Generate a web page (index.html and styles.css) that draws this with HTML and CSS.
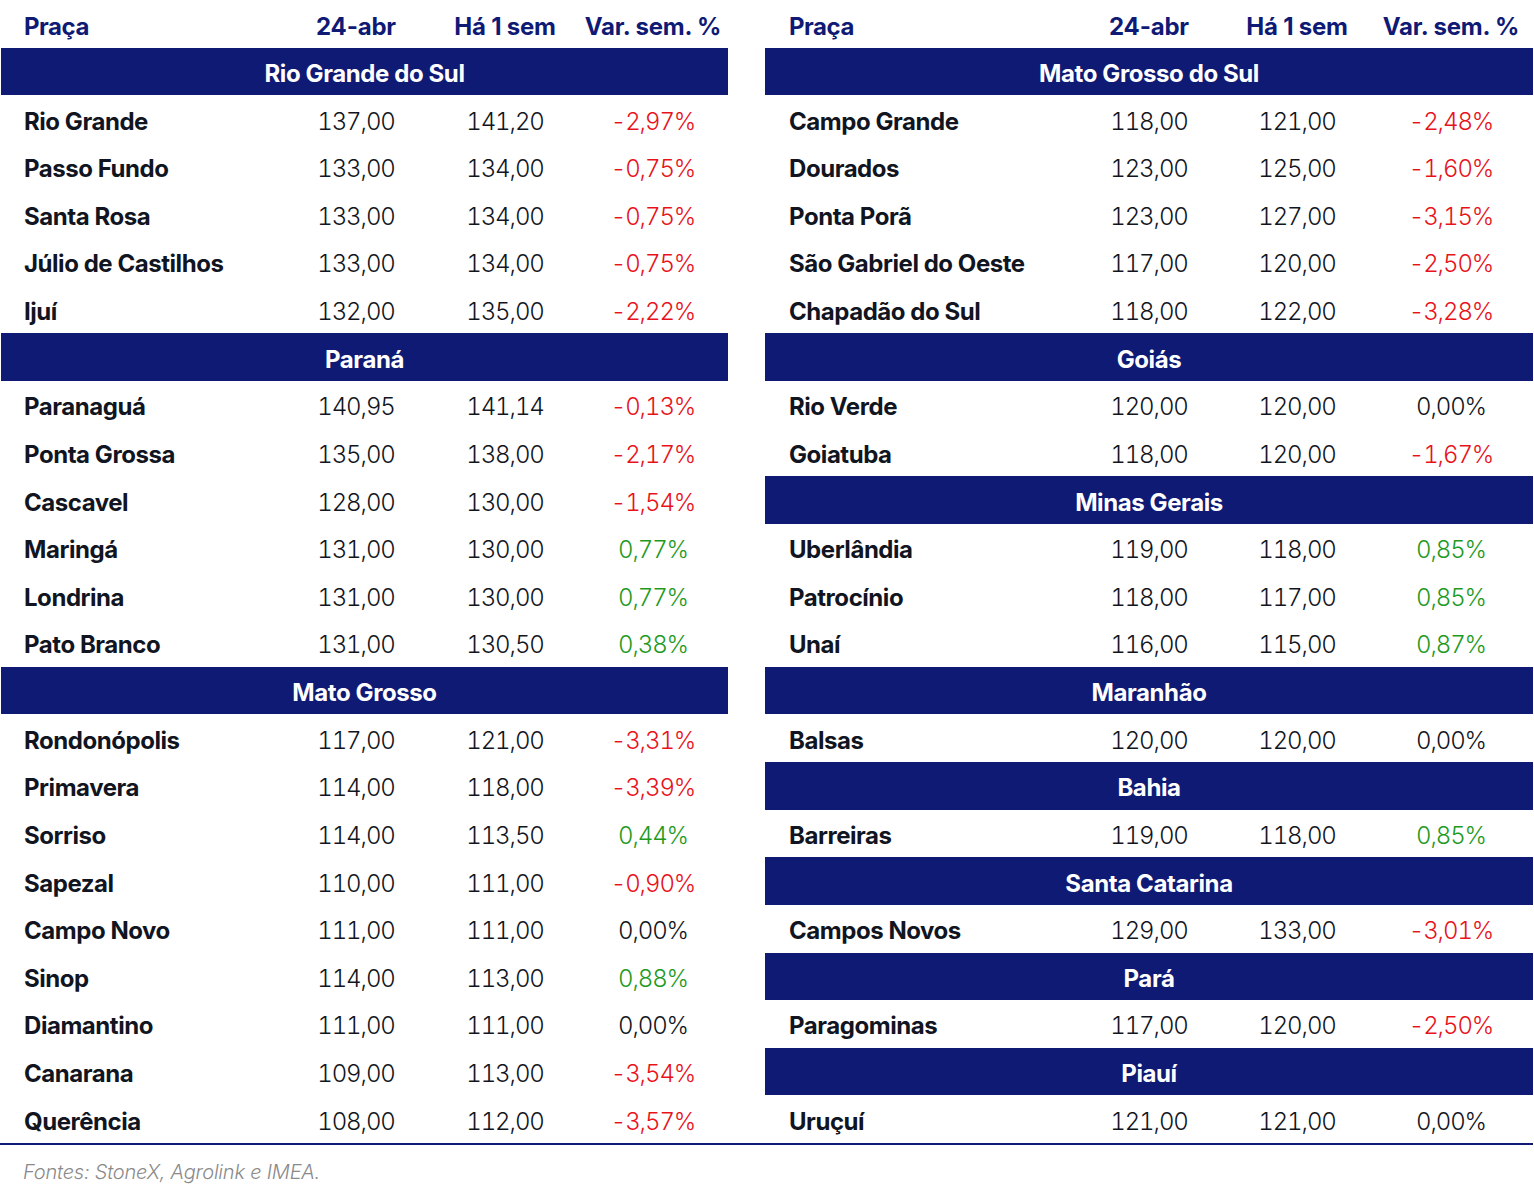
FILE: index.html
```html
<!DOCTYPE html>
<html lang="pt-BR">
<head>
<meta charset="utf-8">
<title>Preços por praça</title>
<link rel="stylesheet" href="styles.css">
</head>
<body>
<div class="sheet">
  <div class="tables">
    <div class="table left">
      <div class="row head"><div class="name">Praça</div><div>24-abr</div><div>Há 1 sem</div><div>Var. sem. %</div></div>
      <div class="bar">Rio Grande do Sul</div>
      <div class="row"><div class="name">Rio Grande</div><div>137,00</div><div>141,20</div><div class="neg">-2,97%</div></div>
      <div class="row"><div class="name">Passo Fundo</div><div>133,00</div><div>134,00</div><div class="neg">-0,75%</div></div>
      <div class="row"><div class="name">Santa Rosa</div><div>133,00</div><div>134,00</div><div class="neg">-0,75%</div></div>
      <div class="row"><div class="name">Júlio de Castilhos</div><div>133,00</div><div>134,00</div><div class="neg">-0,75%</div></div>
      <div class="row"><div class="name">Ijuí</div><div>132,00</div><div>135,00</div><div class="neg">-2,22%</div></div>
      <div class="bar">Paraná</div>
      <div class="row"><div class="name">Paranaguá</div><div>140,95</div><div>141,14</div><div class="neg">-0,13%</div></div>
      <div class="row"><div class="name">Ponta Grossa</div><div>135,00</div><div>138,00</div><div class="neg">-2,17%</div></div>
      <div class="row"><div class="name">Cascavel</div><div>128,00</div><div>130,00</div><div class="neg">-1,54%</div></div>
      <div class="row"><div class="name">Maringá</div><div>131,00</div><div>130,00</div><div class="pos">0,77%</div></div>
      <div class="row"><div class="name">Londrina</div><div>131,00</div><div>130,00</div><div class="pos">0,77%</div></div>
      <div class="row"><div class="name">Pato Branco</div><div>131,00</div><div>130,50</div><div class="pos">0,38%</div></div>
      <div class="bar">Mato Grosso</div>
      <div class="row"><div class="name">Rondonópolis</div><div>117,00</div><div>121,00</div><div class="neg">-3,31%</div></div>
      <div class="row"><div class="name">Primavera</div><div>114,00</div><div>118,00</div><div class="neg">-3,39%</div></div>
      <div class="row"><div class="name">Sorriso</div><div>114,00</div><div>113,50</div><div class="pos">0,44%</div></div>
      <div class="row"><div class="name">Sapezal</div><div>110,00</div><div>111,00</div><div class="neg">-0,90%</div></div>
      <div class="row"><div class="name">Campo Novo</div><div>111,00</div><div>111,00</div><div>0,00%</div></div>
      <div class="row"><div class="name">Sinop</div><div>114,00</div><div>113,00</div><div class="pos">0,88%</div></div>
      <div class="row"><div class="name">Diamantino</div><div>111,00</div><div>111,00</div><div>0,00%</div></div>
      <div class="row"><div class="name">Canarana</div><div>109,00</div><div>113,00</div><div class="neg">-3,54%</div></div>
      <div class="row"><div class="name">Querência</div><div>108,00</div><div>112,00</div><div class="neg">-3,57%</div></div>
    </div>
    <div class="table right">
      <div class="row head"><div class="name">Praça</div><div>24-abr</div><div>Há 1 sem</div><div>Var. sem. %</div></div>
      <div class="bar">Mato Grosso do Sul</div>
      <div class="row"><div class="name">Campo Grande</div><div>118,00</div><div>121,00</div><div class="neg">-2,48%</div></div>
      <div class="row"><div class="name">Dourados</div><div>123,00</div><div>125,00</div><div class="neg">-1,60%</div></div>
      <div class="row"><div class="name">Ponta Porã</div><div>123,00</div><div>127,00</div><div class="neg">-3,15%</div></div>
      <div class="row"><div class="name">São Gabriel do Oeste</div><div>117,00</div><div>120,00</div><div class="neg">-2,50%</div></div>
      <div class="row"><div class="name">Chapadão do Sul</div><div>118,00</div><div>122,00</div><div class="neg">-3,28%</div></div>
      <div class="bar">Goiás</div>
      <div class="row"><div class="name">Rio Verde</div><div>120,00</div><div>120,00</div><div>0,00%</div></div>
      <div class="row"><div class="name">Goiatuba</div><div>118,00</div><div>120,00</div><div class="neg">-1,67%</div></div>
      <div class="bar">Minas Gerais</div>
      <div class="row"><div class="name">Uberlândia</div><div>119,00</div><div>118,00</div><div class="pos">0,85%</div></div>
      <div class="row"><div class="name">Patrocínio</div><div>118,00</div><div>117,00</div><div class="pos">0,85%</div></div>
      <div class="row"><div class="name">Unaí</div><div>116,00</div><div>115,00</div><div class="pos">0,87%</div></div>
      <div class="bar">Maranhão</div>
      <div class="row"><div class="name">Balsas</div><div>120,00</div><div>120,00</div><div>0,00%</div></div>
      <div class="bar">Bahia</div>
      <div class="row"><div class="name">Barreiras</div><div>119,00</div><div>118,00</div><div class="pos">0,85%</div></div>
      <div class="bar">Santa Catarina</div>
      <div class="row"><div class="name">Campos Novos</div><div>129,00</div><div>133,00</div><div class="neg">-3,01%</div></div>
      <div class="bar">Pará</div>
      <div class="row"><div class="name">Paragominas</div><div>117,00</div><div>120,00</div><div class="neg">-2,50%</div></div>
      <div class="bar">Piauí</div>
      <div class="row"><div class="name">Uruçuí</div><div>121,00</div><div>121,00</div><div>0,00%</div></div>
    </div>
  </div>
  <div class="source">Fontes: StoneX, Agrolink e IMEA.</div>
</div>
</body>
</html>
```
FILE: styles.css
```css
* { box-sizing: border-box; }
html, body { margin: 0; padding: 0; background: #fff; }
body {
  font-family: Inter, "Noto Sans", "Liberation Sans", sans-serif;
  color: #111521;
  width: 1534px;
}
.sheet { width: 1533px; }
.tables {
  display: flex;
  gap: 37px;
  border-bottom: 2px solid #0f1a75;
}
.table { display: flex; flex-direction: column; }
.left { width: 727px; margin-left: 1px; }
.right { width: 768px; }
.row {
  display: grid;
  height: 47.625px;
  align-items: center;
  padding-top: 4px;
  font-size: 24px;
  font-weight: 300;
  font-feature-settings: "tnum" 1;
  letter-spacing: -1.1px;
}
.left .row { grid-template-columns: 281px 148px 150px 146px; }
.right .row { grid-template-columns: 310px 148px 148px 160px; }
.row > div { text-align: center; white-space: nowrap; }
.row > .name {
  text-align: left;
  padding-left: 23px;
  font-weight: 700;
  letter-spacing: -0.45px;
  font-feature-settings: normal;
}
.right .row > .name { padding-left: 24px; }
.head { color: #0f1a75; padding-top: 6px; }
.head > div { font-weight: 700; letter-spacing: -0.2px; font-feature-settings: normal; }
.bar {
  height: 47.625px;
  padding-top: 4px;
  background: #0f1a75;
  color: #fff;
  font-size: 24px;
  font-weight: 700;
  letter-spacing: -0.4px;
  display: flex;
  align-items: center;
  justify-content: center;
}
.neg { color: #e8121a; }
.pos { color: #1e9a1e; }
.source {
  padding: 15px 0 0 23px;
  font-size: 20px;
  font-style: italic;
  font-weight: 300;
  color: #8a8a8a;
  letter-spacing: -0.2px;
}
```
